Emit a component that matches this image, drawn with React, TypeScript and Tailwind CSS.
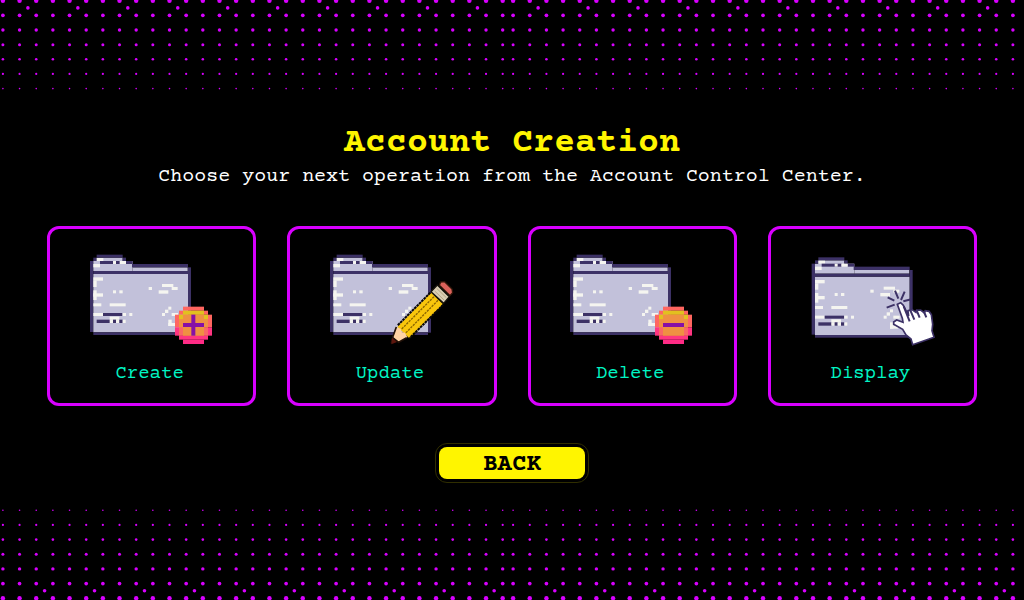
import React from "react";

type Box = [number, number, number, number, string];

const INK = "#3c3166";
const PAPER = "#f5f5f0";
const BASE = "#c2c1da";

const folder: Box[] = [
  [30, 48, 10, 213, INK],
  [40, 48, 118, 30, BASE],
  [50, 38, 78, 12, BASE],
  [158, 67, 165, 11, BASE],
  [40, 87, 284, 175, BASE],
  [50, 29, 78, 9, INK],
  [40, 38, 10, 10, INK],
  [128, 38, 10, 10, INK],
  [138, 48, 20, 9, INK],
  [156, 57, 168, 10, INK],
  [324, 67, 9, 196, INK],
  [40, 78, 284, 9, INK],
  [40, 262, 284, 8, INK],
  [50, 39, 20, 9, PAPER],
  [40, 57, 20, 10, PAPER],
  [60, 48, 60, 9, INK],
  [99, 48, 9, 9, PAPER],
  [119, 48, 19, 9, PAPER],
  [40, 97, 29, 10, PAPER],
  [40, 107, 10, 19, PAPER],
  [40, 136, 10, 29, PAPER],
  [40, 145, 29, 10, PAPER],
  [99, 136, 9, 9, PAPER],
  [118, 136, 10, 9, PAPER],
  [206, 126, 10, 9, PAPER],
  [246, 117, 34, 9, PAPER],
  [275, 126, 18, 9, PAPER],
  [236, 136, 29, 10, PAPER],
  [40, 175, 24, 9, PAPER],
  [89, 175, 48, 9, PAPER],
  [265, 185, 9, 9, PAPER],
  [255, 194, 10, 10, PAPER],
  [246, 204, 9, 9, PAPER],
  [275, 204, 19, 9, PAPER],
  [40, 204, 29, 9, PAPER],
  [69, 204, 58, 9, INK],
  [128, 204, 10, 9, PAPER],
  [148, 204, 9, 9, PAPER],
  [50, 224, 40, 10, INK],
  [89, 215, 29, 9, PAPER],
  [89, 224, 10, 10, PAPER],
  [99, 224, 9, 10, INK],
  [108, 224, 10, 10, PAPER],
  [118, 224, 10, 10, INK],
  [128, 224, 9, 10, PAPER],
  [265, 224, 10, 19, PAPER],
  [265, 234, 24, 9, PAPER],
];

const badge: Box[] = [
  [309, 185, 63, 12, "#ff6660"],
  [297, 197, 87, 12, "#ff6660"],
  [285, 209, 111, 38, "#ff6660"],
  [285, 247, 111, 25, "#ff3580"],
  [297, 272, 87, 12, "#ff3580"],
  [309, 284, 63, 13, "#ff2b85"],
  [297, 247, 87, 25, "#f96866"],
  [297, 222, 87, 25, "#ef9142"],
  [309, 209, 63, 63, "#ef9142"],
  [309, 197, 63, 12, "#e2c01f"],
  [297, 209, 12, 13, "#e2c01f"],
  [372, 209, 12, 13, "#e2c01f"],
  [309, 234, 63, 12, "#8610a6"],
];

function Boxes({ items }: { items: Box[] }) {
  return (
    <>
      {items.map(([x, y, w, h, fill], i) => (
        <rect key={i} x={x} y={y} width={w} height={h} fill={fill} />
      ))}
    </>
  );
}

function Pencil() {
  return (
    <g strokeLinejoin="round">
      <path d="M362 111l12-1 22 22 2 11-8 9-32-31z" fill="#db625b" stroke="#2d1608" strokeWidth="4" />
      <path d="M352 120l36 35-17 20-38-35z" fill="#dacfb5" stroke="#15120b" strokeWidth="4" />
      <path d="M350 130l29 28M344 138l29 28" stroke="#b5a583" strokeWidth="3" />
      <path d="M333 143l36 35-101 102-36-35z" fill="#f9c60c" />
      <path d="M342 155l-99 99M354 166l-99 100" stroke="#8a6500" strokeWidth="4" strokeDasharray="7 3" />
      <path d="M331 143l-99 99M370 179l-101 100" stroke="#090807" strokeWidth="6" strokeDasharray="8 2" />
      <path d="M229 247l13 4 2 10 11 2 7 14-26 14-18-15z" fill="#ffd2a3" />
      <path d="M229 246l-11 31M260 278l-24 14-18-14-4 17" fill="none" stroke="#211108" strokeWidth="5" />
      <path d="M216 278l15 13-17 7z" fill="#5d160e" />
    </g>
  );
}

function Pointer() {
  return (
    <g>
      <path
        d="M285 137l10 24M314 140l-11 25M263 157l20 10M260 188l24-9M310 169l24-6"
        fill="none"
        stroke={INK}
        strokeWidth="6"
      />
      <path
        d="M292 178l10-5 8 8 16 32-2-16 12-3 12 8 2-6 12-1 11 9 3-7 11 2 7 10 4 29-2 19 6 20-64 22-5-17-15-12-10-17-27-15 0-7 9-6 19 7-2-12z"
        fill="#fff"
        stroke={INK}
        strokeWidth="5"
        strokeLinejoin="miter"
      />
      <path d="M311 184l18 45M331 196l12 28M349 194l10 24M371 198l8 19" fill="none" stroke={INK} strokeWidth="6" />
    </g>
  );
}

type Kind = "create" | "update" | "delete" | "display";

function OperationIcon({ kind }: { kind: Kind }) {
  return (
    <svg viewBox="-3 0 426 315" className="h-[105px] w-[142px]" aria-hidden="true">
      <g transform={kind === "display" ? "translate(5 8)" : undefined}>
        <Boxes items={folder} />
      </g>
      {(kind === "create" || kind === "delete") && <Boxes items={badge} />}
      {kind === "create" && <rect x="334" y="209" width="12" height="63" fill="#8610a6" />}
      {kind === "update" && <Pencil />}
      {kind === "display" && <Pointer />}
    </svg>
  );
}

const operations: { kind: Kind; label: string }[] = [
  { kind: "create", label: "Create" },
  { kind: "update", label: "Update" },
  { kind: "delete", label: "Delete" },
  { kind: "display", label: "Display" },
];

const rowRadii = [2.2, 1.85, 1.7, 1.5, 1.3, 1.1, 0.8];

function Halftone({ flipped = false }: { flipped?: boolean }) {
  const dots: [number, number, number][] = [];
  [2.9, 513.1].forEach((start) => {
    rowRadii.forEach((r, row) => {
      for (let i = 0; i < 31; i++) {
        const y = 0.7 + row * 14.65;
        dots.push([start + i * 16.66, flipped ? 98.2 - row * 14.65 : y, r]);
      }
    });
    for (let i = 0; i < 10; i++) {
      dots.push([start + (flipped ? 41.7 : 25) + i * 49.95, flipped ? 90.8 : 7.9, 1.8]);
    }
  });
  return (
    <svg
      viewBox="0 0 1024 100"
      preserveAspectRatio={flipped ? "xMidYMax slice" : "xMidYMin slice"}
      className="h-[100px] w-full shrink-0"
      aria-hidden="true"
    >
      {dots.map(([x, y, r], i) => (
        <circle key={i} cx={x} cy={y} r={r} fill="#d800ff" />
      ))}
    </svg>
  );
}

export default function App() {
  return (
    <div className="flex min-h-screen flex-col justify-between bg-black font-['Courier_Prime','Courier_New','Liberation_Mono',monospace]">
      <Halftone />
      <main className="flex flex-col items-center px-[47px] pt-[7px]">
        <h1 className="text-center text-[35px] leading-[38px] font-bold text-[#fff500]">Account Creation</h1>
        <p className="text-center text-xl leading-7 text-white">
          Choose your next operation from the Account Control Center.
        </p>
        <nav aria-label="Account operations" className="mt-[35px] grid w-full grid-cols-4 gap-[31px]">
          {operations.map(({ kind, label }) => (
            <button
              key={kind}
              type="button"
              className="flex h-[180px] cursor-pointer flex-col items-center rounded-xl border-3 border-[#d800ff] pt-4 pr-1 text-[19px] leading-6 text-[#00f5c4]"
            >
              <OperationIcon kind={kind} />
              <span className="mt-3">{label}</span>
            </button>
          ))}
        </nav>
        <button
          type="button"
          className="mt-[37px] cursor-pointer rounded-xl border border-[#302e00] p-[3px] text-2xl font-bold text-black"
        >
          <span className="flex h-8 w-[146px] items-center justify-center rounded-lg bg-[#fff500] pt-1">BACK</span>
        </button>
      </main>
      <Halftone flipped />
    </div>
  );
}
